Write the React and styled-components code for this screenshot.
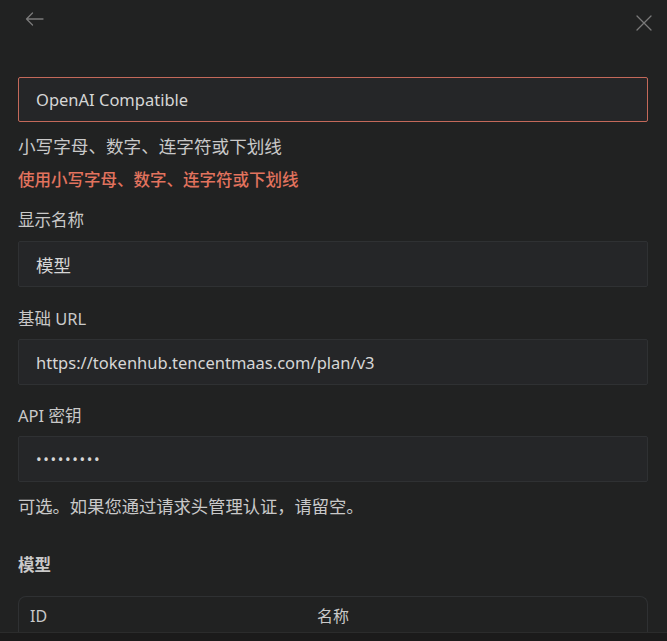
import React from "react";
import styled, { createGlobalStyle } from "styled-components";

const Global = createGlobalStyle`
  html, body { margin: 0; padding: 0; background: #212222; overflow: hidden; }
  body { font-family: "Noto Sans", "Noto Sans CJK SC", sans-serif; color: #d0d0d0; }
  * { box-sizing: border-box; }
`;

const Page = styled.div`
  position: relative;
  width: 667px;
  height: 641px;
  overflow: hidden;
  background: #212222;
`;

const Header = styled.div`
  height: 40px;
  display: flex;
  align-items: flex-start;
  justify-content: space-between;
  padding: 12px 15px 0 25px;
`;

const IconBtn = styled.span`
  display: flex;
  color: #7a7a7a;
  margin-top: ${(p) => p.$mt || 0}px;
`;

const Form = styled.div`
  padding: 0 19px 0 18px;
  display: flex;
  flex-direction: column;
`;

const Input = styled.div`
  height: ${(p) => p.$h || 46}px;
  margin-top: ${(p) => p.$mt || 0}px;
  display: flex;
  align-items: center;
  padding: 0 17px;
  background: #252628;
  border: 1px solid ${(p) => (p.$error ? "#c4695a" : "#2f3133")};
  border-radius: 2px;
  font-size: ${(p) => p.$size || 16.5}px;
  color: #d6d6d6;
  letter-spacing: ${(p) => (p.$dots ? "1.6px" : "0")};
`;

const Text = styled.div`
  margin-top: ${(p) => p.$mt || 0}px;
  font-size: ${(p) => p.$size || 16.5}px;
  line-height: 24px;
  color: ${(p) => p.$color || "#c9c9c9"};
  font-weight: ${(p) => p.$weight || 400};
`;

const Table = styled.div`
  margin-top: 19px;
  border: 1px solid #2f3133;
  border-bottom: none;
  border-radius: 8px 8px 0 0;
  height: 60px;
`;

const TableHead = styled.div`
  display: grid;
  grid-template-columns: 287px 1fr;
  padding: 7px 11px;
  font-size: 16px;
  line-height: 24px;
  color: #c9c9c9;
`;

const Footer = styled.div`
  position: absolute;
  left: 0;
  right: 0;
  bottom: 0;
  height: 9px;
  background: #1b1b1b;
  border-top: 1px solid #2b2c2c;
  z-index: 2;
`;

export default function App() {
  return (
    <Page>
      <Global />
      <Header>
        <IconBtn>
          <svg width="19" height="14" viewBox="0 0 19 14" fill="none" stroke="currentColor" strokeWidth="1.3" strokeLinecap="round" strokeLinejoin="round">
            <path d="M18 7H1.5M7.5 1L1.5 7l6 6" />
          </svg>
        </IconBtn>
        <IconBtn $mt={3}>
          <svg width="16" height="16" viewBox="0 0 16 16" fill="none" stroke="currentColor" strokeWidth="1.3" strokeLinecap="round">
            <path d="M1 1l14 14M15 1L1 15" />
          </svg>
        </IconBtn>
      </Header>
      <Form>
        <Input $mt={37} $h={45} $error>OpenAI Compatible</Input>
        <Text $mt={12} $size={17.6}>小写字母、数字、连字符或下划线</Text>
        <Text $mt={10} $color="#e2735e" $weight={500}>使用小写字母、数字、连字符或下划线</Text>
        <Text $mt={16}>显示名称</Text>
        <Input $mt={9} $size={17.5}>模型</Input>
        <Text $mt={20}>基础 URL</Text>
        <Input $mt={8}>https://tokenhub.tencentmaas.com/plan/v3</Input>
        <Text $mt={19}>API 密钥</Text>
        <Input $mt={8} $dots $size={15}>•••••••••</Input>
        <Text $mt={13} $size={17.3}>可选。如果您通过请求头管理认证，请留空。</Text>
        <Text $mt={34} $weight={600}>模型</Text>
        <Table>
          <TableHead>
            <span>ID</span>
            <span>名称</span>
          </TableHead>
        </Table>
      </Form>
      <Footer />
    </Page>
  );
}
